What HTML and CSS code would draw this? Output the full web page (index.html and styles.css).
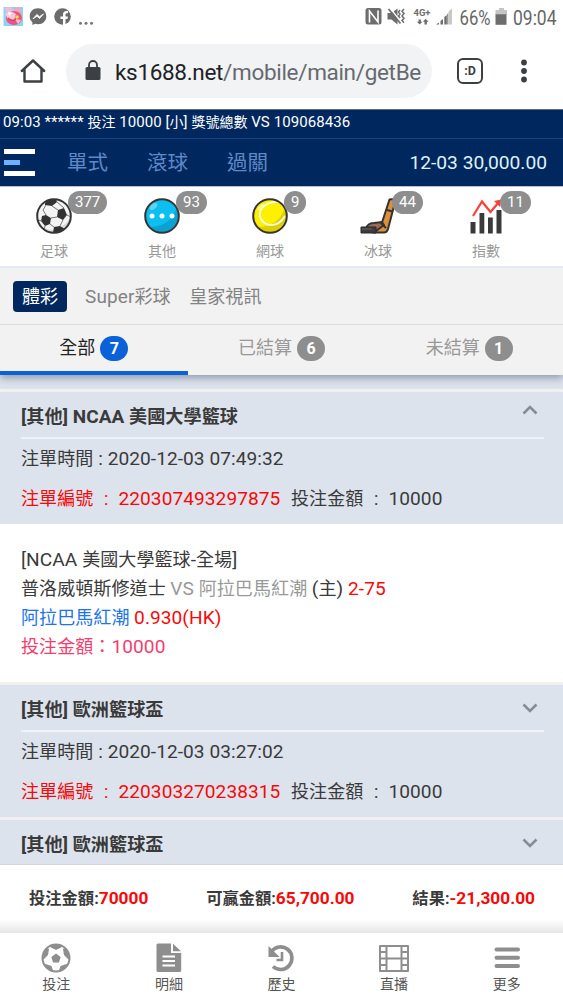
FILE: index.html
```html
<!DOCTYPE html>
<html lang="zh-Hant">
<head>
<meta charset="utf-8">
<title>投注記錄</title>
<link rel="stylesheet" href="styles.css">
</head>
<body>
<div class="phone">
  <div class="status">
    <svg class="st-left" width="100" height="34" viewBox="0 0 100 34">
      <rect x="3.500" y="7" width="19.500" height="19" fill="#8ed3f2"/>
      <path d="M4 8l7-1 4 6-6 3z" fill="#e3c3dc"/>
      <path d="M14 8l6-1 1 8-5 2z" fill="#f3a7bd"/>
      <ellipse cx="14" cy="18" rx="8" ry="7" fill="#ee5384"/>
      <path d="M5 14q5-5 11 0l-2 6-6-1zM15 19l6 1-3 4z" fill="#f9c9da"/>
      <path d="M8 12l4 1-3 3z" fill="#fff"/><path d="M8 18q4 4 8 1" stroke="#d83c77" stroke-width="1.200" fill="none"/>
      <circle cx="17" cy="17" r="1.800" fill="#f8da2c"/>
      <path d="M38 8.300c-4.900 0-8.300 3.500-8.300 7.900 0 2.500 1 4.500 2.700 6v2.900l2.800-1.300c.9.200 1.800.4 2.800.4 4.900 0 8.300-3.500 8.300-8S42.900 8.300 38 8.300z" fill="#6b6b6b"/>
      <path d="M33 18.800l3.900-4.400 2.600 2.300 4-2.800-4 4.600-2.500-2.300z" fill="#fff" stroke="#fff" stroke-width=".8"/>
      <circle cx="62.500" cy="16.500" r="8.300" fill="#6b6b6b"/>
      <path d="M63 25v-6h-2.600v-2.600H63v-2c0-2.300 1.300-3.500 3.400-3.500l1.600.1v2.200h-1.200c-1 0-1.300.6-1.300 1.400v1.800h2.400l-.4 2.600h-2V25z" fill="#fff"/>
      <g fill="#777"><circle cx="80.500" cy="23.200" r="1.500"/><circle cx="86" cy="23.200" r="1.500"/><circle cx="91.500" cy="23.200" r="1.500"/></g>
    </svg>
    <div class="st-right">
      <svg width="90" height="34" viewBox="364 0 90 34">
        <rect x="365.500" y="8" width="16" height="16.500" rx="2.500" fill="#6d6d6d"/>
        <path d="M369.500 22.500V11l8.500 11V10.500" fill="none" stroke="#fff" stroke-width="1.600"/>
        <path d="M387.500 13h4l6-4.500v16l-6-5h-4z" fill="#6d6d6d"/>
        <path d="M390 8l11 14" stroke="#fff" stroke-width="1.400"/>
        <path d="M388.500 9l12 14.500" stroke="#6d6d6d" stroke-width="1.700"/>
        <path d="M400 10l-1.500 2 1.500 2-1.500 2 1.500 2M404 9l-2 2.300 2 2.300-2 2.300 2 2.300-2 2.300 2 2.300" stroke="#6d6d6d" stroke-width="1.500" fill="none"/>
        <text class="net" x="413.500" y="16" textLength="17" lengthAdjust="spacingAndGlyphs">4G+</text>
        <path d="M418.500 19.500h2.400v2.200h1.600l-2.800 2.800-2.800-2.800h1.600zM424.500 24.500h2.400v-2.700h1.600l-2.800-3-2.800 3h1.600z" fill="#6d6d6d"/>
        <path d="M436 24.500l3-2v2zM440.500 21l2.500-2v5.500h-2.500zM444.300 17l2.500-2v9.500h-2.500z" fill="#6d6d6d"/>
        <path d="M447.300 14l1-1v11.500h-1z" fill="#6d6d6d"/><path d="M448.500 11.500l3.500-3v16h-3.500z" fill="#c8c8c8"/>
      </svg>
      <svg class="st-num" width="109" height="34" viewBox="454 0 109 34">
        <text x="459.500" y="24.500" textLength="31" lengthAdjust="spacingAndGlyphs">66%</text>
        <path d="M499 8h5v2h3v5h-11.500v-5H499z" fill="#c4c4c4"/><rect x="495.500" y="14.300" width="11" height="10.500" fill="#6d6d6d"/>
        <text x="513" y="24.500" textLength="43.500" lengthAdjust="spacingAndGlyphs">09:04</text>
      </svg>
    </div>
  </div>

  <div class="browser">
    <svg class="home" width="26" height="26" viewBox="0 0 26 26"><path d="M1.800 13L13 2.500 24.200 13M4.500 11.500v12h17v-12" fill="none" stroke="#3c4043" stroke-width="2.400" stroke-linejoin="round" stroke-linecap="round"/></svg>
    <div class="url">
      <svg width="16" height="21" viewBox="0 0 16 21"><rect x=".5" y="7" width="15" height="13" rx="1.500" fill="#3c4043"/><path d="M4 8V5a4 4 0 0 1 8 0v3" fill="none" stroke="#3c4043" stroke-width="1.800"/></svg>
      <span class="addr"><b>ks1688.net</b>/mobile/main/getBe</span>
    </div>
    <div class="tabcount">:D</div>
    <svg class="kebab" width="6" height="24" viewBox="0 0 6 24" fill="#3c4043"><circle cx="3" cy="3.500" r="2.900"/><circle cx="3" cy="12" r="2.900"/><circle cx="3" cy="20.500" r="2.900"/></svg>
  </div>

  <div class="ticker"><i>09:03 ****** </i>投注<i> 10000 [</i>小<i>] </i>獎號總數<i> VS 109068436</i></div>
  <div class="menu">
    <div class="burger"><span></span><span class="mid"></span><span></span></div>
    <div class="modes"><span>單式</span><span>滾球</span><span>過關</span></div>
    <div class="money">12-03 30,000.00</div>
  </div>

  <div class="sports">
    <div class="sport">
      <svg width="36" height="36" viewBox="0 0 36 36"><defs><clipPath id="b"><circle cx="18" cy="18" r="16.500"/></clipPath></defs>
        <circle cx="18" cy="18" r="17" fill="#f4f4f4"/>
        <g clip-path="url(#b)"><path d="M4 27q14 12 29-5l4 15H8z" fill="#d8d8d8"/><g fill="#333"><path d="M9 5l5-5 6 1 1 3-5 4-7-1zM22 12l6-2 3 7-4 5-6-3zM6 18l4-1 5 3-1 6-5 2-4-5zM18 29l6-1 5 3-6 5-6-1zM0 14l3-3 1-4-5 3zM31 5l3 5 2-2z"/></g>
        <path d="M16 8l6 4M21 4l7 6M10 7l-3 5 3 5M15 20l6-1M14 26l4 3M27 22l-3 6M31 17l4 2M2 22l4 1M9 28l-1 4" stroke="#777" fill="none"/></g>
        <circle cx="18" cy="18" r="16.800" fill="none" stroke="#353535" stroke-width="2"/></svg>
      <em>377</em><span>足球</span>
    </div>
    <div class="sport">
      <svg width="36" height="36" viewBox="0 0 36 36"><circle cx="18" cy="18" r="17" fill="#0bbff0"/><path d="M5 29q22 0 28-20 4 14-7 23-11 7-21-3z" fill="#0aa2d2"/><ellipse cx="9.500" cy="8.500" rx="4.500" ry="2.600" transform="rotate(-40 9.500 8.500)" fill="#5bd3f5"/><circle cx="18" cy="18" r="16.800" fill="none" stroke="#353535" stroke-width="2"/><g fill="#fff"><circle cx="8" cy="18" r="2.500"/><circle cx="18" cy="18" r="2.500"/><circle cx="28" cy="18" r="2.500"/></g></svg>
      <em>93</em><span>其他</span>
    </div>
    <div class="sport">
      <svg width="36" height="36" viewBox="0 0 36 36"><circle cx="18" cy="18" r="17" fill="#fff000"/><path d="M5 29q22 0 28-20 4 14-7 23-11 7-21-3z" fill="#dfd000"/><ellipse cx="9" cy="9" rx="4" ry="2" transform="rotate(-40 9 9)" fill="#fff780"/><path d="M28 4C11 3 5 14 9 21s16 10 24-3" fill="none" stroke="#fff" stroke-width="1.700"/><circle cx="18" cy="18" r="16.800" fill="none" stroke="#353535" stroke-width="2"/></svg>
      <em>9</em><span>網球</span>
    </div>
    <div class="sport">
      <svg width="36" height="36" viewBox="0 0 36 36"><path d="M29.500 1.500q4-1 6 1L28 31q-1 3.500-4 3.500H13l3-8 6-2z" fill="#dc9139" stroke="#333" stroke-width="2" stroke-linejoin="round"/><path d="M6 30q2-5 8-5l8-1 2 3-8 6H6z" fill="#9c6a56" stroke="#333" stroke-width="1.800"/><path d="M27 12l5.500 1.500M20 24l6 6" fill="none" stroke="#333" stroke-width="2"/><path d="M1 29h15v6H1z" fill="#3c3c3c" stroke="#292929"/><path d="M2 31h10" stroke="#666"/></svg>
      <em>44</em><span>冰球</span>
    </div>
    <div class="sport">
      <svg width="36" height="36" viewBox="0 0 36 36"><path d="M2.500 24h5v11.500h-5zM11.500 15h4.800v20.500h-4.800zM20 19.500h4.800v16H20zM28.500 12h5v23.500h-5z" fill="#3a3a3a"/><path d="M5 18l9-14.500 8.500 10.500L31 4" fill="none" stroke="#f8403c" stroke-width="2.200"/><path d="M26 3l7-1.500L32 9z" fill="#f8403c"/></svg>
      <em>11</em><span>指數</span>
    </div>
  </div>

  <div class="cats"><span class="on">體彩</span><span><i>Super</i>彩球</span><span class="last">皇家視訊</span></div>
  <div class="tabs">
    <div class="tab on">全部<em>7</em></div><div class="tab">已結算<em>6</em></div><div class="tab">未結算<em>1</em></div>
  </div>

  <div class="list">
    <div class="card">
      <div class="title"><h3><i>[</i>其他<i>] NCAA </i>美國大學籃球</h3><svg class="up" width="16" height="10" viewBox="0 0 16 10"><path d="M1.500 8.500L8 2l6.500 6.500" fill="none" stroke="#868c95" stroke-width="2.500"/></svg></div>
      <p class="time">注單時間<i> : 2020-12-03 07:49:32</i></p>
      <p class="num"><span class="red idn">注單編號</span><span class="colon red">:</span><i class="red serial">220307493297875</i><span class="amt">投注金額</span><span class="colon">:</span><i>10000</i></p>
    </div>
    <div class="detail">
      <p><i>[NCAA </i>美國大學籃球<i>-</i>全場<i>]</i></p>
      <p>普洛威頓斯修道士 <span class="grey"><i>VS </i>阿拉巴馬紅潮</span> <i>(</i>主<i>) <span class="red">2-75</span></i></p>
      <p><span class="blue">阿拉巴馬紅潮</span> <i class="red">0.930(HK)</i></p>
      <p class="pink">投注金額：<i>10000</i></p>
    </div>
    <div class="card">
      <div class="title"><h3><i>[</i>其他<i>] </i>歐洲籃球盃</h3><svg width="16" height="10" viewBox="0 0 16 10"><path d="M1.500 1.500L8 8l6.500-6.500" fill="none" stroke="#868c95" stroke-width="2.500"/></svg></div>
      <p class="time">注單時間<i> : 2020-12-03 03:27:02</i></p>
      <p class="num"><span class="red idn">注單編號</span><span class="colon red">:</span><i class="red serial">220303270238315</i><span class="amt">投注金額</span><span class="colon">:</span><i>10000</i></p>
    </div>
    <div class="card">
      <div class="title"><h3><i>[</i>其他<i>] </i>歐洲籃球盃</h3><svg width="16" height="10" viewBox="0 0 16 10"><path d="M1.500 1.500L8 8l6.500-6.500" fill="none" stroke="#868c95" stroke-width="2.500"/></svg></div>
    </div>
  </div>

  <div class="totals">
    <span>投注金額:<i>70000</i></span><span>可贏金額:<i>65,700.00</i></span><span>結果:<i>-21,300.00</i></span>
  </div>

  <div class="nav">
    <div><svg width="30" height="30" viewBox="0 0 30 30"><defs><clipPath id="n"><circle cx="15" cy="15" r="13"/></clipPath></defs><circle cx="15" cy="15" r="13.500" fill="#fff" stroke="#8e8e8e" stroke-width="2"/><path clip-path="url(#n)" d="M15 10.500l4.700 3.400-1.800 5.500h-5.800l-1.800-5.500zM15 7l-6-3 2-4h8l2 4zM7 12l-6 6-2-9 5-6 4 3zM23 12l6 6 2-9-5-6-4 3zM10.500 23L3 20.500l3 8 7 2zM19.500 23L27 20.500l-3 8-7 2z" fill="#8e8e8e"/></svg><span>投注</span></div>
    <div><svg width="30" height="30" viewBox="0 0 30 30"><path d="M2.500 2q0-1.500 1.500-1.500h13V10h10.200v17.500q0 1.500-1.500 1.500H4q-1.500 0-1.500-1.500zM19 .8L27 8.300h-8z" fill="#8e8e8e"/><path d="M8.500 13.500H21M8.500 18H21M8.500 22.500H21" stroke="#fff" stroke-width="1.900"/></svg><span>明細</span></div>
    <div><svg width="30" height="30" viewBox="0 0 30 30"><path d="M5.500 8.500A11.300 11.300 0 1 1 7 23.500" fill="none" stroke="#8e8e8e" stroke-width="3.600"/><path d="M2.500 3v11h11z" fill="#8e8e8e"/><path d="M16 9v8h-5.500" fill="none" stroke="#8e8e8e" stroke-width="2.600"/></svg><span>歷史</span></div>
    <div><svg width="32" height="30" viewBox="0 0 32 30"><path d="M2 3h28v25H2zM8.500 3v25M23.500 3v25M8.500 15.500h15M2 9h6.500M2 15.500h6.500M2 22h6.500M23.500 9H30M23.500 15.500H30M23.500 22H30" fill="none" stroke="#8e8e8e" stroke-width="2" stroke-linejoin="round"/></svg><span>直播</span></div>
    <div><svg width="30" height="30" viewBox="0 0 30 30"><path d="M4.500 6.500h21.500M4.500 14.700h21.500M4.500 23h21.500" stroke="#8e8e8e" stroke-width="4" stroke-linecap="round"/></svg><span>更多</span></div>
  </div>
</div>
</body>
</html>
```

FILE: styles.css
```css
* { box-sizing: border-box; }
body { margin: 0; background: #fff; font-family: Roboto, "Noto Sans CJK TC", sans-serif; color: #3a3a3a; }
i, em { font-style: normal; }
p, h3 { margin: 0; }
svg { display: block; flex: none; }
.phone { width: 563px; height: 1000px; overflow: hidden; display: flex; flex-direction: column; }
.phone > div { flex: none; }

.status { height: 34px; display: flex; justify-content: space-between; }
.st-right { display: flex; }
.net { font: bold 9.5px Roboto, sans-serif; fill: #6d6d6d; }
.st-num { font: 20px Roboto, sans-serif; fill: #666; }

.browser { height: 75px; display: flex; align-items: center; padding: 0 36px 2px 20px; }
.url { width: 366px; height: 54px; margin-left: 20px; border-radius: 27px; background: #f1f3f4; display: flex; align-items: center; padding: 0 8px 0 19px; gap: 14px; }
.home { margin-top: 1px; }
.addr { font-size: 22.5px; letter-spacing: -.32px; line-height: 54px; color: #666a6e; white-space: nowrap; padding-top: 2px; }
.addr b { font-weight: 400; color: #202124; }
.tabcount { width: 26px; height: 26px; margin-left: 25px; border: 2.4px solid #3c4043; border-radius: 6px; font: bold 12.5px/21px Roboto, sans-serif; text-align: center; color: #3c4043; }
.kebab { margin-left: auto; }

.ticker { height: 30px; background: #00285e; border-top: 1px solid #5b6a86; border-bottom: 1px solid #174580; color: #fff; font-size: 14px; line-height: 25px; padding-left: 3px; white-space: pre; }
.ticker i { font-size: 15px; letter-spacing: .07px; }
.menu { height: 47px; background: #00285e; display: flex; align-items: center; padding: 0 16px 0 4px; }
.burger { width: 31px; display: flex; flex-direction: column; gap: 6px; }
.burger span { height: 5px; background: #fff; }
.burger .mid { width: 16px; background: #6cb1fb; }
.modes { display: flex; gap: 39px; margin-left: 32px; margin-top: -4px; font-size: 20.5px; color: #5f88c6; }
.money { margin-left: auto; color: #dff3fb; font-size: 19.2px; letter-spacing: 0; }

.sports { height: 82px; display: flex; border-top: 1px solid #b9c2d0; border-bottom: 2px solid #e3eaf1; }
.sport { width: 108px; position: relative; display: flex; flex-direction: column; align-items: center; padding-top: 11px; }
.sport span { font-size: 14px; line-height: 20px; margin-top: 7px; color: #999; }
.sport em { position: absolute; left: 68px; top: 4px; height: 23px; line-height: 23px; border-radius: 12px; padding: 0 7px; font-size: 15px; background: #8e8e8e; color: #fff; }

.cats { height: 57px; background: #f2f2f2; border-bottom: 1px solid #ddd; display: flex; align-items: center; padding: 0 0 2px 13px; font-size: 18.1px; color: #828282; position: relative; z-index: 1; }
.cats .on { width: 54px; height: 31px; line-height: 31px; margin-top: 2px; border-radius: 4px; background: #00285e; color: #fff; text-align: center; margin-right: 18px; }
.cats i { font-size: 19px; letter-spacing: .1px; }
.cats .last { margin-left: 18.5px; }
.tabs { height: 50px; background: #f2f2f2; display: flex; position: relative; box-shadow: 0 3px 8px #8f99a9; }
.tab { flex: 1; display: flex; justify-content: center; align-items: center; font-size: 18px; line-height: 24px; color: #999; border-bottom: 4px solid transparent; gap: 5px; }
.tab em { width: 28px; height: 25px; border-radius: 13px; background: #8e8e8e; color: #fff; font-weight: 700; font-size: 16px; line-height: 25px; text-align: center; }
.tab.on { color: #222; border-color: #0b62d8; }
.tab.on em { background: #0b62d8; }

.list { height: 489px; overflow: hidden; background: #dce3ed; padding-top: 14px; font-size: 18.05px; letter-spacing: .06px; }
.list i { font-size: 19.1px; letter-spacing: .06px; white-space: pre; }
.card { height: 135px; border-top: 3px solid #f0f0f0; padding: 0 19px 0 21px; }
.title { height: 47px; border-bottom: 2px solid #f0f2f7; display: flex; justify-content: space-between; align-items: center; padding-right: 6px; }
.title svg { margin-top: 1px; }
.title .up { margin-top: -9px; }
.title h3 { font-size: 18.1px; font-weight: 700; line-height: 26px; margin-top: 5px; }
.title h3 i { letter-spacing: .05px; font-size: 19px; }
.time { line-height: 40px; height: 40px; }
.num { display: flex; line-height: 40px; height: 40px; align-items: baseline; }
.idn, .amt { width: 73px; }
.colon { width: 24.5px; text-align: center; }
.serial { width: 172.5px; }
.detail { height: 158px; background: #fff; padding: 20.5px 21px 0; }
.detail p { line-height: 29.3px; height: 29.3px; white-space: nowrap; }
.red { color: #f80808; }
.grey { color: #999; }
.blue { color: #2173ec; }
.pink { color: #f13e70; }

.totals { height: 69px; background: linear-gradient(#fff 80%, #e6e6e6); display: flex; justify-content: space-between; padding: 0 28px 0 29px; font-size: 16.3px; font-weight: 700; line-height: 66px; border-top: 1px solid #d2d6dc; }
.totals i { color: #f80808; font-size: 17.3px; letter-spacing: 0; }
.nav { height: 67px; display: flex; background: #fff; }
.nav div { flex: 1; display: flex; flex-direction: column; align-items: center; padding-top: 10px; }
.nav span { font-size: 14px; line-height: 20px; color: #555; margin-top: 1px; }
```
